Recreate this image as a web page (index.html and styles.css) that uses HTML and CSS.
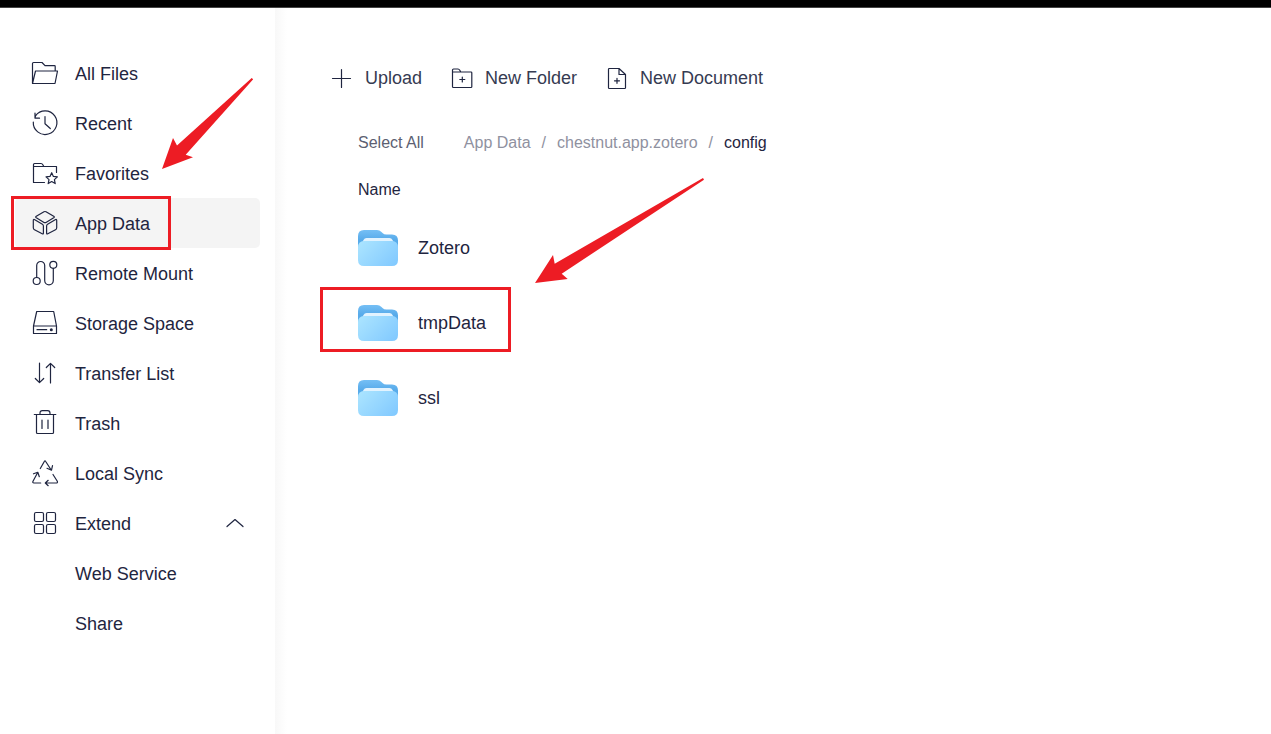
FILE: index.html
```html
<!DOCTYPE html>
<html lang="en">
<head>
    <meta charset="UTF-8">
    <title>Files</title>

    <link rel="stylesheet" href="styles.css">
</head>
<body>
    <div class="topbar"></div>
    <div class="layout">
        <nav class="sidebar">
            <a class="item" href="#all">
                <svg class="icon" viewBox="0 0 28 28"><path d="M1.500 24.500V4.500q0-1 1-1h8.500l3 3.200h9.500q.7 0 .7.800v4.500M1.500 24.500l3-12.500h22l-2.500 12.500z"/></svg>
                All Files
            </a>
            <a class="item" href="#recent">
                <svg class="icon" viewBox="0 0 28 28"><path d="M2.300 13a11.800 11.800 0 1 0 2.200-6.200L4 9.200M4 4v5.200h4.500M14 7.500v7.200l5.300 4.800"/></svg>
                Recent
            </a>
            <a class="item" href="#favorites">
                <svg class="icon" viewBox="0 0 28 28"><path d="M13.500 23.500H2.500V5.500q0-1 1-1h6.500q1.200 0 2 1.500l.8 1.500h12.700v6M2.500 7.500h10.500M20.700 13.700l1.700 3.700 4 .5-3 2.700.8 4-3.500-2-3.500 2 .8-4-3-2.700 4-.5z"/></svg>
                Favorites
            </a>
            <a class="item active" href="#appdata">
                <svg class="icon" viewBox="0 0 28 28"><path d="M13 2.800q1-.6 2 0l7.700 4.400q1.200.8 0 1.600L15 13.400q-1 .6-2 0L5.300 8.800q-1.200-.8 0-1.600zM3.800 10.700l7.600 4.500q1 .6 1 1.800v7q0 1.500-1.200.8l-7.700-4q-1.200-.6-1.200-2v-7.200q0-1.700 1.500-.9zM24.200 10.700l-7.600 4.500q-1 .6-1 1.800v7q0 1.500 1.200.8l7.700-4q1.200-.6 1.200-2v-7.200q0-1.700-1.500-.9z"/></svg>
                App Data
            </a>
            <a class="item" href="#mount">
                <svg class="icon" viewBox="0 0 28 28"><circle cx="5.700" cy="22" r="3.500"/><circle cx="22.300" cy="5.800" r="3.500"/><path d="M5.700 18.500v-12a4 4 0 0 1 8 0v15a4.300 4.300 0 0 0 8.600 0V9.300"/></svg>
                Remote Mount
            </a>
            <a class="item" href="#storage">
                <svg class="icon" viewBox="0 0 28 28"><path d="M5.700 2.500h17L25.500 17v7.500h-23V17zM2.500 17h23M6 20.700h9.700"/><circle class="dot" cx="20.300" cy="20.700" r="1.500"/></svg>
                Storage Space
            </a>
            <a class="item" href="#transfer">
                <svg class="icon" viewBox="0 0 28 28"><path d="M8.500 4v19.500M4.300 19.500l4.200 4.200 4.200-4.200M19.500 24V4.500M15.300 8.500l4.200-4.200 4.200 4.200"/></svg>
                Transfer List
            </a>
            <a class="item" href="#trash">
                <svg class="icon" viewBox="0 0 28 28"><path d="M3.300 5.500h21.500M5.500 5.500v18q0 1 1 1h15q1 0 1-1v-18M9 5.500V4q0-2.300 2.300-2.300h5.400Q19 1.700 19 4v1.500M11 11v8.500M17 11v8.500"/></svg>
                Trash
            </a>
            <a class="item" href="#sync">
                <svg class="icon" viewBox="0 0 28 28"><path d="M9.300 9.500l4-7q.7-1.200 1.400 0l5.500 8.500M16 9.300l4.500 1.900 1-4.500M9.700 24H3q-1.800 0-1-1.800l4.700-8.700M2.500 14.800l4.300-1.500 1.500 4.400M22 15.500l4.300 6.800q.7 1.700-1.300 1.700H14.500M17.200 21.300L14.300 24l2.900 2.700"/></svg>
                Local Sync
            </a>
            <a class="item" href="#extend">
                <svg class="icon" viewBox="0 0 28 28"><rect x="3.500" y="3.500" width="9" height="9" rx="1.500"/><rect x="15.500" y="3.500" width="9" height="9" rx="1.500"/><rect x="3.500" y="15.500" width="9" height="9" rx="1.500"/><rect x="15.500" y="15.500" width="9" height="9" rx="1.500"/></svg>
                Extend
                <svg class="chevron" viewBox="0 0 18 10"><path d="M1 8.500l8-7 8 7"/></svg>
            </a>
            <a class="item sub" href="#web">Web Service</a>
            <a class="item sub" href="#share">Share</a>
        </nav>

        <main class="main">
            <div class="toolbar">
                <button class="tool" type="button">
                    <svg viewBox="0 0 24 24"><path d="M12.500 3.500v18M3.500 12.500h18"/></svg>
                    Upload
                </button>
                <button class="tool" type="button">
                    <svg viewBox="0 0 24 24"><path d="M3.500 20.500V4q0-1 1-1h4.500q1 0 1.800 1.300l1 1.700h10.200q.8 0 .8.800v14q0 .7-.8.700h-17.700q-.8 0-.8-1zM3.500 6h8.500M13.300 11v5M10.800 13.500h5"/></svg>
                    New Folder
                </button>
                <button class="tool" type="button">
                    <svg viewBox="0 0 24 24"><path d="M15 2.500H5.300q-.8 0-.8.800v18.400q0 .8.800.8h15.400q.8 0 .8-.8V8.500zM15 2.500v6h6.500M13 12.300v5M10.500 14.800h5"/></svg>
                    New Document
                </button>
            </div>

            <div class="path">
                <button class="select-all" type="button">Select All</button>
                <a href="#appdata">App Data</a>
                <span class="sep">/</span>
                <a href="#zotero">chestnut.app.zotero</a>
                <span class="sep">/</span>
                <span class="current">config</span>
            </div>

            <table class="files">
                <thead>
                    <tr><th>Name</th></tr>
                </thead>
                <tbody>
                    <tr><td><div class="file"><svg viewBox="0 0 40 36"><use href="#folder"/></svg>Zotero</div></td></tr>
                    <tr><td><div class="file"><svg viewBox="0 0 40 36"><use href="#folder"/></svg>tmpData</div></td></tr>
                    <tr><td><div class="file"><svg viewBox="0 0 40 36"><use href="#folder"/></svg>ssl</div></td></tr>
                </tbody>
            </table>
        </main>
    </div>

    <!-- red marks over the page -->
    <svg class="marks" width="720" height="360">
        <rect x="12.500" y="197.500" width="157" height="51"/>
        <rect x="321.500" y="288.500" width="188" height="62"/>
        <path d="M162 169L173 138l4 7.500L251.700 78l1.500 1.200L185.700 154.700l7.300 2.600z"/>
        <path d="M535 283L553 255l1.700 8.700L703 178l1 1.700L561.700 273.700l6 5.300z"/>
    </svg>

    <svg class="defs" width="0" height="0">
        <defs>
            <linearGradient id="back" x1="0" y1="0" x2="0" y2="1">
                <stop offset="0" stop-color="#75bff5"></stop>
                <stop offset=".4" stop-color="#58abea"></stop>
            </linearGradient>
            <linearGradient id="front" x1="0" y1=".2" x2="1" y2=".8">
                <stop offset="0" stop-color="#a9e3ff"></stop>
                <stop offset="1" stop-color="#83caff"></stop>
            </linearGradient>
            <symbol id="folder" viewBox="0 0 40 36">
                <path fill="url(#back)" d="M0 24V6q0-6 6-6h13q2.500 0 4.500 2l1 1q1.500 1.500 4 1.500H34q6 0 6 6V24z"/>
                <path fill="#e2f3ff" d="M4 13l1.500-3Q6.500 8 8.500 8h23q2 0 3 2l1.500 3z"/>
                <path fill="url(#front)" d="M0 17.500Q0 11 6 11h28q6 0 6 6.500V30q0 6-6 6H6q-6 0-6-6z"/>
            </symbol>
        </defs>
    </svg>
</body>
</html>
```
FILE: styles.css
```css
* {
    box-sizing: border-box;
}

body {
    margin: 0;
    min-height: 100vh;

    display: flex;
    flex-direction: column;

    background: #fff;
    color: #1f2540;
    font-family: "Liberation Sans", Arial, sans-serif;
    font-size: 18px;
}

a {
    color: inherit;
    text-decoration: none;
}

button {
    padding: 0;

    border: 0;
    background: none;
    color: inherit;
    font: inherit;

    cursor: pointer;
}

svg {
    flex: none;
    fill: none;
    stroke: #1f2540;
    stroke-width: 1.2;
    stroke-linecap: round;
    stroke-linejoin: round;
}

.topbar {
    height: 8px;

    background: #000;
    border-bottom: 1px solid #444;
}

.layout {
    flex: 1;
    display: flex;
}

.sidebar {
    flex: none;
    width: 275px;
    padding: 40px 15px;
}

.item {
    height: 50px;
    padding: 2px 16px 0;

    display: flex;
    align-items: center;
    gap: 16px;

    border-radius: 5px;
}

.item.active {
    background: #f4f4f4;
}

.item.sub {
    padding-left: 60px;
}

.icon {
    width: 28px;
    height: 28px;
    margin-bottom: 2px;
}

.icon .dot {
    fill: #1f2540;
    stroke: none;
}

.chevron {
    width: 18px;
    height: 10px;
    margin-left: auto;
    margin-bottom: 2px;
}

.main {
    flex: 1;
    padding: 56px 54px;

    background: linear-gradient(to right, #f8f8f8, #fff 12px);
}

.toolbar {
    height: 28px;

    display: flex;
    align-items: center;
    gap: 27px;

    color: #363b52;
}

.tool {
    display: flex;
    align-items: center;
    gap: 12px;
}

.tool svg {
    width: 24px;
    height: 24px;
}

.path {
    height: 28px;
    margin-top: 37px;
    padding-left: 29px;

    display: flex;
    align-items: center;
    gap: 11px;

    color: #8f919f;
    font-size: 16px;
}

.select-all {
    margin-right: 29px;

    color: #5c5f72;
}

.path .current {
    color: #1f2540;
}

.files {
    width: 100%;
    margin-top: 14px;

    border-collapse: collapse;
}

.files th {
    height: 38px;
    padding: 0 0 0 29px;

    font-size: 16px;
    font-weight: normal;
    text-align: left;
}

.files td {
    height: 75px;
    padding: 3px 0 0 29px;
}

.file {
    display: flex;
    align-items: center;
    gap: 20px;
}

.file svg {
    width: 40px;
    height: 36px;

    stroke: none;
}

.marks {
    position: absolute;
    top: 0;
    left: 0;

    pointer-events: none;
}

.marks rect {
    stroke: #ed1c24;
    stroke-width: 3;
    stroke-linejoin: miter;
}

.marks path {
    fill: #ed1c24;
    stroke: none;
}

.defs {
    position: absolute;
}
```
